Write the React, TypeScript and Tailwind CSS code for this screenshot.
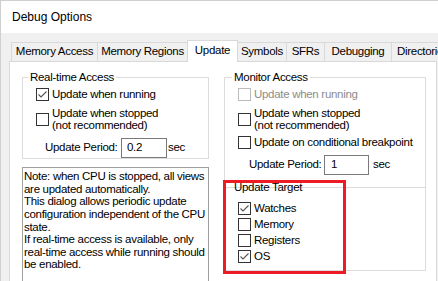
import type { ReactNode } from "react";

function Check({ checked, disabled }: { checked?: boolean; disabled?: boolean }) {
  return (
    <span
      className={`flex h-[13px] w-[13px] shrink-0 items-center justify-center border bg-white ${
        disabled ? "border-[#bcbcbc]" : "border-[#333333]"
      }`}
    >
      {checked && (
        <svg width="11" height="11" viewBox="0 0 11 11">
          <path d="M1.5 5.5 L4 8 L9.5 2.5" fill="none" stroke="#555555" strokeWidth="1.1" />
        </svg>
      )}
    </span>
  );
}

function CheckRow({
  checked,
  disabled,
  children,
  className = "",
}: {
  checked?: boolean;
  disabled?: boolean;
  children: ReactNode;
  className?: string;
}) {
  return (
    <label className={`flex items-center gap-[3px] ${disabled ? "text-[#8c8c8c]" : ""} ${className}`}>
      <Check checked={checked} disabled={disabled} />
      <span className="leading-[12px]">{children}</span>
    </label>
  );
}

const tabs = [
  { label: "Memory Access", w: "w-[87px] justify-center" },
  { label: "Memory Regions", w: "w-[91px] justify-center" },
  { label: "Update", w: "w-[51px] justify-center", active: true },
  { label: "Symbols", w: "w-[50px] justify-center" },
  { label: "SFRs", w: "w-[39px] justify-center" },
  { label: "Debugging", w: "w-[68px] justify-center" },
  { label: "Directories", w: "w-[80px] pl-[5px]" },
];

const note = [
  "Note: when CPU is stopped, all views",
  "are updated automatically.",
  "This dialog allows periodic update",
  "configuration independent of the CPU",
  "state.",
  "If real-time access is available, only",
  "real-time access while running should",
  "be enabled.",
];

export default function App() {
  return (
    <div className="relative h-[281px] w-[438px] overflow-hidden border-l border-t border-[#cfcfcf] bg-[#f0f0f0] font-['Liberation_Sans',sans-serif] text-[11.5px] tracking-[-0.3px] text-black">
      {/* title bar */}
      <div className="flex h-[32px] items-center bg-white pl-[11px] text-[12px] tracking-normal">
        Debug Options
      </div>

      <div className="pl-[8px] pt-[7px]">
        {/* tab strip */}
        <div className="relative z-10 -mb-px ml-[2px] flex items-end">
          {tabs.map((t, i) => (
            <div
              key={t.label}
              className={`flex shrink-0 items-center whitespace-nowrap border-x border-t border-[#d9d9d9] ${t.w} ${
                i > 0 ? "-ml-px" : ""
              } ${t.active ? "relative z-10 h-[22px] bg-white pb-[2px]" : "mb-px h-[19px] bg-[#f0f0f0]"}`}
            >
              {t.label}
            </div>
          ))}
        </div>

        {/* tab panel */}
        <div className="flex h-[240px] w-[428px] gap-[15px] border border-[#d9d9d9] bg-white pl-[12px] pt-[8px]">
          {/* left column */}
          <div className="flex w-[187px] shrink-0 flex-col">
            <fieldset className="h-[94px] border border-[#dcdcdc]">
              <legend className="ml-[5px] px-[2px] leading-[14px]">Real-time Access</legend>
              <div className="flex flex-col pl-[13px]">
                <CheckRow checked className="mt-[3px] h-[14px]">
                  Update when running
                </CheckRow>
                <CheckRow className="mt-[6px]">
                  Update when stopped
                  <br />
                  (not recommended)
                </CheckRow>
                <div className="mt-[7px] flex items-center pl-[9px]">
                  <span className="w-[76px]">Update Period:</span>
                  <div className="flex h-[20px] w-[46px] items-center border border-[#7a7a7a] pl-[5px]">0.2</div>
                  <span className="ml-[1px]">sec</span>
                </div>
              </div>
            </fieldset>

            <div className="mt-[8px] h-[140px] border border-[#a0a0a0] bg-white pl-[1px] pt-[2px] leading-[12.6px]">
              {note.map((l) => (
                <div key={l} className="whitespace-nowrap">
                  {l}
                </div>
              ))}
            </div>
          </div>

          {/* right column */}
          <div className="flex w-[202px] shrink-0 flex-col">
            <fieldset className="h-[118px] border border-[#dcdcdc]">
              <legend className="ml-[7px] px-[2px] leading-[14px]">Monitor Access</legend>
              <div className="flex flex-col pl-[13px]">
                <CheckRow disabled className="mt-[3px] h-[14px]">
                  Update when running
                </CheckRow>
                <CheckRow className="mt-[6px]">
                  Update when stopped
                  <br />
                  (not recommended)
                </CheckRow>
                <CheckRow className="mt-[4px] h-[14px]">Update on conditional breakpoint</CheckRow>
                <div className="mt-[6px] flex items-center pl-[11px]">
                  <span className="w-[75px]">Update Period:</span>
                  <div className="flex h-[20px] w-[45px] items-center border border-[#7a7a7a] pl-[6px]">1</div>
                  <span className="ml-[4px]">sec</span>
                </div>
              </div>
            </fieldset>

            <fieldset className="-mt-[8px] h-[91px] border border-[#dcdcdc]">
              <legend className="ml-[7px] px-[2px] leading-[14px]">Update Target</legend>
              <div className="mt-[6px] flex flex-col pl-[13px]">
                <CheckRow checked className="h-[16px] gap-[2px]">
                  Watches
                </CheckRow>
                <CheckRow className="h-[16px] gap-[2px]">Memory</CheckRow>
                <CheckRow className="h-[16px] gap-[2px]">Registers</CheckRow>
                <CheckRow checked className="h-[16px] gap-[2px]">
                  OS
                </CheckRow>
              </div>
            </fieldset>
          </div>
        </div>
      </div>

      {/* red highlight drawn over the dialog */}
      <div className="pointer-events-none absolute left-[222px] top-[179px] h-[94px] w-[123px] border-[3px] border-[#ed1c24]" />
    </div>
  );
}
